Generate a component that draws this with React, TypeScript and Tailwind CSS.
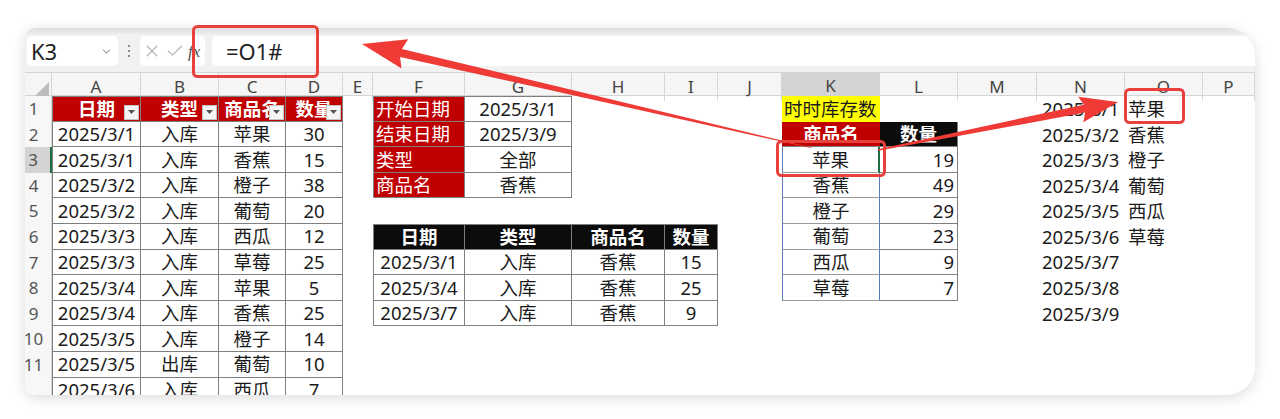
// Excel screenshot: formula bar, column headers and a few small tables,
// with red callout boxes and arrows drawn over the top.

import { ChevronDown, X, Check } from 'lucide-react';

type Cell = { t?: string; c?: string; filter?: boolean };

const LETTERS = ['A', 'B', 'C', 'D', 'E', 'F', 'G', 'H', 'I', 'J', 'K', 'L', 'M', 'N', 'O', 'P'];

const GRID =
  'grid grid-cols-[27px_89px_78px_67px_57px_30px_92px_107px_93px_53px_64px_98px_78px_79px_88px_78px_1fr]';

const LOG = [
  ['2025/3/1', '入库', '苹果', '30'],
  ['2025/3/1', '入库', '香蕉', '15'],
  ['2025/3/2', '入库', '橙子', '38'],
  ['2025/3/2', '入库', '葡萄', '20'],
  ['2025/3/3', '入库', '西瓜', '12'],
  ['2025/3/3', '入库', '草莓', '25'],
  ['2025/3/4', '入库', '苹果', '5'],
  ['2025/3/4', '入库', '香蕉', '25'],
  ['2025/3/5', '入库', '橙子', '14'],
  ['2025/3/5', '出库', '葡萄', '10'],
  ['2025/3/6', '入库', '西瓜', '7'],
];

const PARAMS = [
  ['开始日期', '2025/3/1'],
  ['结束日期', '2025/3/9'],
  ['类型', '全部'],
  ['商品名', '香蕉'],
];

const RESULT = [
  ['2025/3/1', '入库', '香蕉', '15'],
  ['2025/3/4', '入库', '香蕉', '25'],
  ['2025/3/7', '入库', '香蕉', '9'],
];

const ITEMS = ['苹果', '香蕉', '橙子', '葡萄', '西瓜', '草莓'];
const STOCK = ['19', '49', '29', '23', '9', '7'];

const RED_HEAD = 'bg-[#c00000] text-white font-bold justify-center';
const BLACK_HEAD = 'bg-[#0c0c0c] text-white font-bold justify-center';
const BD = 'border-[#7f7f7f]';

function buildRow(r: number): Record<string, Cell> {
  const row: Record<string, Cell> = {};

  // A-D: source log
  const t1 = (col: string) =>
    `border-r border-b ${BD} ${col === 'A' ? 'border-l' : ''} ${r === 1 ? 'border-t' : ''}`;
  if (r === 1) {
    ['日期', '类型', '商品名', '数量'].forEach((t, i) => {
      const col = LETTERS[i];
      row[col] = { t, c: `${RED_HEAD} ${t1(col)}`, filter: true };
    });
  } else {
    LOG[r - 2].forEach((t, i) => {
      const col = LETTERS[i];
      row[col] = { t, c: `justify-center ${t1(col)}` };
    });
  }

  // F-G: parameters
  if (r <= 4) {
    const top = r === 1 ? 'border-t' : '';
    row.F = { t: PARAMS[r - 1][0], c: `bg-[#c00000] text-white pl-[2px] border-l border-r border-b ${BD} ${top}` };
    row.G = { t: PARAMS[r - 1][1], c: `justify-center border-r border-b ${BD} ${top}` };
  }

  // F-I: filtered result
  if (r >= 6 && r <= 9) {
    const cols = ['F', 'G', 'H', 'I'];
    const vals = r === 6 ? ['日期', '类型', '商品名', '数量'] : RESULT[r - 7];
    cols.forEach((col, i) => {
      const edge = `border-r border-b ${BD} ${col === 'F' ? 'border-l' : ''} ${r === 6 ? 'border-t' : ''}`;
      row[col] = { t: vals[i], c: `${r === 6 ? BLACK_HEAD : 'justify-center'} ${edge}` };
    });
  }

  // K-L: live stock
  if (r === 1) row.K = { t: '时时库存数', c: 'bg-[#ffff00] pl-[2px]' };
  if (r === 2) {
    row.K = { t: '商品名', c: `${RED_HEAD} border-b ${BD}` };
    row.L = { t: '数量', c: `${BLACK_HEAD} border-b border-r ${BD}` };
  }
  if (r >= 3 && r <= 8) {
    const right = r === 3 ? 'border-r-2 border-r-[#1e6e42]' : 'border-r border-r-[#5a7bbd]';
    row.K = {
      t: ITEMS[r - 3],
      c: `justify-center border-l border-l-[#5a7bbd] ${right} border-b border-b-[#9a9a9a]`,
    };
    row.L = { t: STOCK[r - 3], c: `justify-end pr-[3px] border-r border-b ${BD}` };
  }

  // N-O: spill ranges
  if (r <= 9) row.N = { t: `2025/3/${r}`, c: 'pl-[5px]' };
  if (r <= 6) row.O = { t: ITEMS[r - 1], c: 'pl-[3px]' };

  return row;
}

function FilterButton() {
  return (
    <span className="absolute right-[1px] bottom-[1px] w-[15px] h-[15px] bg-[#f4f4f4] border border-[#c4c4c4] flex items-center justify-center">
      <svg width="7" height="4" viewBox="0 0 7 4">
        <path d="M0 0 L7 0 L3.5 4 Z" fill="#555" />
      </svg>
    </span>
  );
}

function FormulaBar() {
  return (
    <div className="h-[38px] shrink-0 bg-[#f1f1f1] flex items-start pt-[2px]">
      <div className="ml-[2px] w-[91px] h-[30px] bg-white rounded-[5px] flex items-center justify-between pl-[4px] pr-[5px]">
        <span className="text-[22px] text-[#222] leading-none">K3</span>
        <ChevronDown size={13} strokeWidth={1.8} className="text-[#666]" />
      </div>
      <div className="w-[22px] h-[30px] flex flex-col items-center justify-center gap-[3px]">
        <span className="w-[2px] h-[2px] rounded-full bg-[#666]" />
        <span className="w-[2px] h-[2px] rounded-full bg-[#666]" />
        <span className="w-[2px] h-[2px] rounded-full bg-[#666]" />
      </div>
      <div className="w-[65px] h-[30px] bg-white rounded-[5px] flex items-center pl-[2px] gap-[3px]">
        <X size={20} strokeWidth={1.3} className="text-[#b4b4b4]" />
        <Check size={20} strokeWidth={1.3} className="text-[#b4b4b4]" />
        <span className="font-['Liberation_Serif',serif] italic text-[17px] text-[#555] leading-none">fx</span>
      </div>
      <div className="ml-[7px] flex-1 h-[30px] bg-white rounded-l-[5px] flex items-center pl-[14px]">
        <span className="text-[22px] text-[#222] leading-none">=O1#</span>
      </div>
    </div>
  );
}

function ColumnHeader() {
  return (
    <div className={`${GRID} h-[24px] shrink-0 bg-[#f5f5f5] border-t border-b border-[#d6d6d6]`}>
      <div className="border-r border-[#d6d6d6] flex items-end justify-end pr-[2px] pb-[2px]">
        <svg width="17" height="17" viewBox="0 0 17 17">
          <path d="M17 0 L17 17 L0 17 Z" fill="#bdbdbd" />
        </svg>
      </div>
      {LETTERS.map((l) => (
        <div
          key={l}
          className={`flex items-center justify-center text-[17px] text-[#444] border-r border-[#d6d6d6] ${
            l === 'K' ? 'bg-[#d4d4d4] border-b-2 border-b-[#1e6e42]' : ''
          }`}
        >
          {l}
        </div>
      ))}
    </div>
  );
}

function Rows() {
  const rows = Array.from({ length: 12 }, (_, i) => i + 1);
  return (
    <div className="shrink-0">
      {rows.map((r) => {
        const cells = buildRow(r);
        return (
          <div key={r} className={`${GRID} h-[25.6px]`}>
            <div
              className={`flex items-center justify-center pr-[9px] text-[17px] text-[#555] border-r ${
                r === 3 ? 'bg-[#d4d4d4] border-r-2 border-[#1e6e42]' : 'bg-[#f7f7f7] border-[#d6d6d6]'
              }`}
            >
              {r < 12 ? r : ''}
            </div>
            {LETTERS.map((l) => {
              const cell = cells[l];
              return (
                <div
                  key={l}
                  className={`relative flex items-center text-[18.5px] text-[#1a1a1a] whitespace-nowrap overflow-hidden ${
                    cell?.c ?? ''
                  }`}
                >
                  {cell?.t}
                  {cell?.filter && <FilterButton />}
                </div>
              );
            })}
          </div>
        );
      })}
    </div>
  );
}

// tapered shaft + triangular head, from tail (tx,ty) to tip (px,py)
function arrowPoints(tx: number, ty: number, px: number, py: number, len: number, half: number, t0: number, t1: number) {
  const dx = px - tx;
  const dy = py - ty;
  const d = Math.hypot(dx, dy);
  const ux = dx / d;
  const uy = dy / d;
  const nx = -uy;
  const ny = ux;
  const bx = px - ux * len;
  const by = py - uy * len;
  const pts = [
    [tx + nx * t0, ty + ny * t0],
    [bx + nx * t1, by + ny * t1],
    [bx + nx * half - ux * 4, by + ny * half - uy * 4],
    [px, py],
    [bx - nx * half - ux * 4, by - ny * half - uy * 4],
    [bx - nx * t1, by - ny * t1],
    [tx - nx * t0, ty - ny * t0],
  ];
  return pts.map(([x, y]) => `${x.toFixed(1)},${y.toFixed(1)}`).join(' ');
}

function Callouts() {
  return (
    <svg className="absolute top-0 left-0 pointer-events-none" width="1280" height="419" viewBox="0 0 1280 419">
      <rect x="193.5" y="26.5" width="124" height="50" rx="4" fill="none" stroke="#e8403b" strokeWidth="3" />
      <rect x="777.5" y="141.5" width="107" height="34" rx="4" fill="none" stroke="#e8403b" strokeWidth="3" />
      <rect x="1125.5" y="89.5" width="58" height="33" rx="4" fill="none" stroke="#e8403b" strokeWidth="3" />
      <polygon points={arrowPoints(812, 148, 362, 44, 40, 15, 0.3, 4)} fill="#ef3a35" />
      <polygon points={arrowPoints(878, 150, 1118, 102, 34, 13, 0.8, 4)} fill="#ef3a35" />
    </svg>
  );
}

export default function App() {
  return (
    <div className="relative w-[1280px] h-[419px] bg-white overflow-hidden font-['Noto_Sans','Noto_Sans_CJK_SC',sans-serif]">
      <div className="pt-[28px] pl-[25px] pr-[25px]">
        <div className="h-[367px] rounded-l-[10px] rounded-r-[28px] overflow-hidden bg-white shadow-[0_3px_14px_rgba(0,0,0,0.14)] flex flex-col">
          <div className="h-[6px] shrink-0 bg-gradient-to-b from-[#dedede] to-[#ececec]" />
          <FormulaBar />
          <ColumnHeader />
          <Rows />
        </div>
      </div>
      <Callouts />
    </div>
  );
}
